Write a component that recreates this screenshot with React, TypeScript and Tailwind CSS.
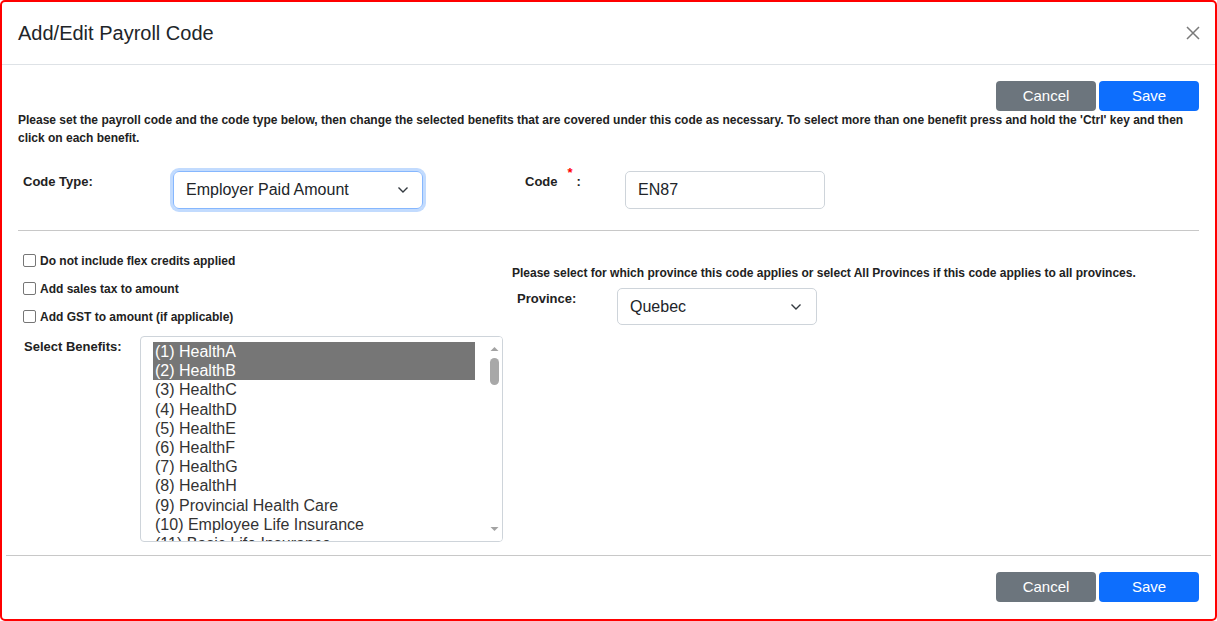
import React from "react";

const font = { fontFamily: '"Liberation Sans", Arial, sans-serif' };

function Chevron() {
  return (
    <svg width="12" height="8" viewBox="0 0 12 8" className="shrink-0">
      <polyline points="1.5,1.5 6,6 10.5,1.5" fill="none" stroke="#343a40" strokeWidth="1.4" />
    </svg>
  );
}

function Buttons() {
  return (
    <div className="flex justify-end gap-[3px]">
      <button className="w-[100px] h-[30px] rounded-[4px] bg-[#6c757d] text-white text-[15px]">Cancel</button>
      <button className="w-[100px] h-[30px] rounded-[4px] bg-[#0d6efd] text-white text-[15px]">Save</button>
    </div>
  );
}

function Check({ label }: { label: string }) {
  return (
    <div className="h-[28px] flex items-center pl-[5px]">
      <span className="w-[13px] h-[13px] border border-[#767676] rounded-[2px] bg-white mr-[4px]" />
      <span className="text-[12px] font-bold text-[#222] pt-[2px]">{label}</span>
    </div>
  );
}

const items = [
  "(1) HealthA",
  "(2) HealthB",
  "(3) HealthC",
  "(4) HealthD",
  "(5) HealthE",
  "(6) HealthF",
  "(7) HealthG",
  "(8) HealthH",
  "(9) Provincial Health Care",
  "(10) Employee Life Insurance",
  "(11) Basic Life Insurance",
];

export default function App() {
  return (
    <div style={font} className="w-[1217px] h-[621px] bg-white">
      <div className="w-[1217px] h-[621px] border-2 border-[#ff0000] rounded-[5px] flex flex-col overflow-hidden">
        <div className="h-[63px] shrink-0 border-b border-[#dee2e6] flex items-center justify-between pl-[16px] pr-[15px]">
          <h5 className="text-[20px] text-[#212529] leading-none">Add/Edit Payroll Code</h5>
          <svg width="14" height="14" viewBox="0 0 14 14">
            <path d="M1 1 L13 13 M13 1 L1 13" stroke="#7a7a7a" strokeWidth="1.5" />
          </svg>
        </div>

        <div className="flex-1 px-[16px] pt-[16px]">
          <Buttons />
          <p className="text-[12px] font-bold leading-[18px] text-[#222]">
            Please set the payroll code and the code type below, then change the selected benefits that are covered under this code as necessary. To select more than one benefit press and hold the 'Ctrl' key and then click on each benefit.
          </p>

          <div className="mt-[24px] h-[38px] flex">
            <div className="w-[155px] pl-[5px] pt-[1px] text-[13px] font-bold text-[#222]">Code Type:</div>
            <div className="w-[250px] h-[38px] border border-[#86b7fe] rounded-[6px] shadow-[0_0_0_3px_#c2dbfe] flex items-center justify-between pl-[12px] pr-[13px] text-[16px] text-[#212529]">
              <span>Employer Paid Amount</span>
              <Chevron />
            </div>
            <div className="w-[102px]" />
            <div className="w-[100px] pt-[1px] text-[13px] font-bold text-[#222] flex items-start">
              <span>Code</span>
              <span className="text-[#ff0000] text-[13px] ml-[10px] -mt-[9px]">*</span>
              <span className="ml-[4px]">:</span>
            </div>
            <div className="w-[200px] h-[38px] border border-[#ced4da] rounded-[5px] flex items-center pl-[12px] text-[16px] text-[#212529]">
              EN87
            </div>
          </div>

          <div className="mt-[21px] border-t border-[#c8c8c8]" />

          <div className="flex">
            <div className="w-[494px] shrink-0 pt-[15px]">
              <Check label="Do not include flex credits applied" />
              <Check label="Add sales tax to amount" />
              <Check label="Add GST to amount (if applicable)" />
              <div className="flex mt-[6px]">
                <div className="w-[122px] pl-[6px] pt-[1px] text-[13px] font-bold text-[#222]">Select Benefits:</div>
                <div className="relative w-[363px] h-[206px] border border-[#ced4da] rounded-[4px] overflow-hidden pt-[5px] pl-[12px]">
                  {items.map((it, i) => (
                    <div
                      key={it}
                      className={
                        "w-[322px] h-[19.2px] leading-[19px] text-[16px] pl-[2px] whitespace-nowrap " +
                        (i < 2 ? "bg-[#767676] text-white" : "text-[#333]")
                      }
                    >
                      {it}
                    </div>
                  ))}
                  <div className="absolute right-0 top-0 bottom-0 w-[16px] bg-white flex flex-col items-center">
                    <svg width="9" height="6" viewBox="0 0 9 6" className="mt-[9px]">
                      <polygon points="4.5,1 8.5,5 0.5,5" fill="#a3a3a3" />
                    </svg>
                    <div className="w-[9px] h-[27px] rounded-[5px] bg-[#a8a8a8] mt-[6px]" />
                    <div className="flex-1" />
                    <svg width="9" height="6" viewBox="0 0 9 6" className="mb-[9px]">
                      <polygon points="0.5,1 8.5,1 4.5,5" fill="#a3a3a3" />
                    </svg>
                  </div>
                </div>
              </div>
            </div>
            <div className="pt-[34px]">
              <p className="text-[12px] font-bold leading-[16px] text-[#222]">
                Please select for which province this code applies or select All Provinces if this code applies to all provinces.
              </p>
              <div className="flex mt-[7px]">
                <div className="w-[105px] pl-[5px] pt-[1px] text-[13px] font-bold text-[#222]">Province:</div>
                <div className="w-[200px] h-[37px] border border-[#ced4da] rounded-[5px] flex items-center justify-between pl-[12px] pr-[14px] text-[16px] text-[#212529]">
                  <span>Quebec</span>
                  <Chevron />
                </div>
              </div>
            </div>
          </div>
        </div>

        <div className="h-[64px] shrink-0 mx-[4px] border-t border-[#c8c8c8] pt-[16px] pr-[12px]">
          <Buttons />
        </div>
      </div>
    </div>
  );
}
